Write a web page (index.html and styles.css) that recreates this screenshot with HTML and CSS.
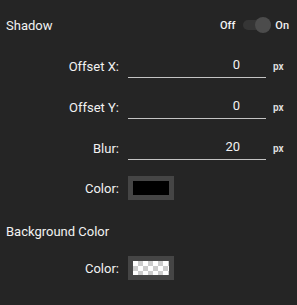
FILE: index.html
```html
<!DOCTYPE html>
<html>
<head>
    <meta charset="UTF-8">
    <title>Shadow settings</title>
    <link rel="stylesheet" href="styles.css">
</head>
<body>
    <div class="panel">
        <div class="section-head">
            <span class="section-title">Shadow</span>
            <div class="switch">
                <span class="switch-label">Off</span>
                <span class="switch-track"><span class="switch-knob"></span></span>
                <span class="switch-label">On</span>
            </div>
        </div>

        <div class="field">
            <label class="field-label">Offset X:</label>
            <input class="field-input" type="text" value="0">
            <span class="unit">px</span>
        </div>
        <div class="field">
            <label class="field-label">Offset Y:</label>
            <input class="field-input" type="text" value="0">
            <span class="unit">px</span>
        </div>
        <div class="field">
            <label class="field-label">Blur:</label>
            <input class="field-input" type="text" value="20">
            <span class="unit">px</span>
        </div>
        <div class="field swatch-row">
            <label class="field-label">Color:</label>
            <span class="swatch"><span class="swatch-fill black"></span></span>
        </div>

        <div class="section-head bg-head">
            <span class="section-title">Background Color</span>
        </div>
        <div class="field bg-row">
            <label class="field-label">Color:</label>
            <span class="swatch"><span class="swatch-fill transparent"></span></span>
        </div>
    </div>
</body>
</html>
```

FILE: styles.css
```css
body {
    margin: 0;
    background-color: #252525;
    font-family: Roboto, "Liberation Sans", sans-serif;
    color: #f2f2f2;
}
.panel {
    padding: 14px 8px 0 6px;
}
.section-head {
    display: flex;
    justify-content: space-between;
    align-items: center;
    height: 22px;
    margin-bottom: 18px;
}
.section-title {
    font-size: 13px;
}
.switch {
    display: flex;
    align-items: center;
}
.switch-label {
    font-size: 11px;
    font-weight: 500;
}
.switch-track {
    position: relative;
    width: 28px;
    height: 10px;
    margin: 0 4px 0 8px;
    border-radius: 5px;
    background-color: #353535;
}
.switch-knob {
    position: absolute;
    right: 0;
    top: -3px;
    width: 16px;
    height: 16px;
    border-radius: 50%;
    background-color: #4c4c4c;
}
.field {
    display: flex;
    align-items: center;
    height: 24px;
    margin-bottom: 17px;
}
.field-label {
    width: 113px;
    margin-right: 9px;
    text-align: right;
    font-size: 13px;
}
.field-input {
    width: 138px;
    height: 24px;
    box-sizing: border-box;
    padding: 0 26px 2px 0;
    border: none;
    border-bottom: 1px solid #c4c4c4;
    background: transparent;
    color: #f2f2f2;
    font-family: Roboto, "Liberation Sans", sans-serif;
    font-size: 13px;
    text-align: right;
    outline: none;
}
.unit {
    margin-left: 7px;
    font-size: 10px;
    font-weight: bold;
    color: #dcdcdc;
}
.swatch-row {
    margin-top: -1px;
    margin-bottom: 0;
}
.swatch {
    display: block;
    width: 46px;
    height: 24px;
    box-sizing: border-box;
    border: 5px solid #454545;
}
.swatch-fill {
    display: block;
    width: 100%;
    height: 100%;
}
.swatch-fill.black {
    background-color: #000;
}
.swatch-fill.transparent {
    background: repeating-conic-gradient(#cccccc 0 25%, #ffffff 0 50%) 0 0 / 10px 10px;
}
.bg-head {
    margin-top: 20px;
    margin-bottom: 14px;
}
.bg-row {
    margin-bottom: 0;
}
```
